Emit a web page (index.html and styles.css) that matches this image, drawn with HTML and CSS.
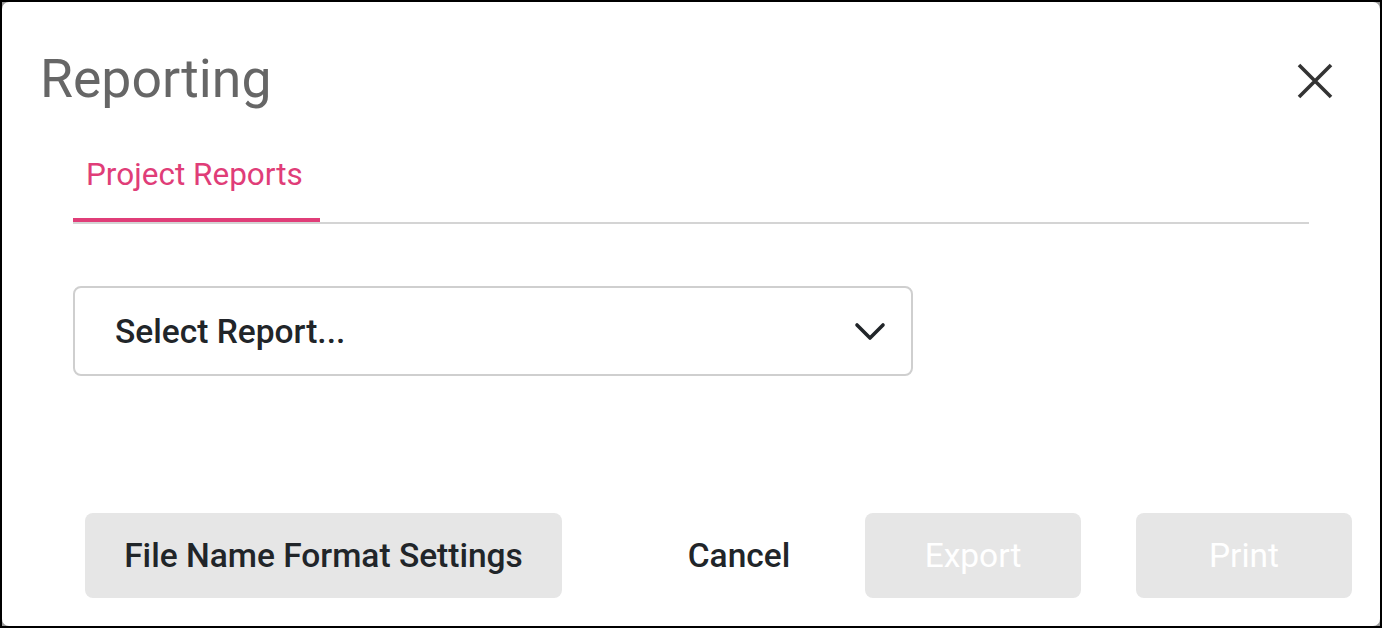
FILE: index.html
```html
<!DOCTYPE html>
<html lang="en">
<head>
<meta charset="utf-8">
<title>Reporting</title>
<link rel="stylesheet" href="styles.css">
</head>
<body>
<div class="screen">
  <div class="dialog">
    <header class="dialog-header">
      <h1 class="dialog-title">Reporting</h1>
      <button class="close-btn" aria-label="Close">
        <svg width="36" height="36" viewBox="0 0 36 36"><path d="M2 2 L34 34 M34 2 L2 34" stroke="#333" stroke-width="3.6" fill="none"/></svg>
      </button>
    </header>
    <div class="dialog-body">
      <nav class="tabs">
        <div class="tab active">Project Reports</div>
      </nav>
      <div class="select">
        <span class="select-text">Select Report...</span>
        <svg class="chevron" width="32" height="20" viewBox="0 0 32 20"><path d="M3 3 L16 16 L29 3" stroke="#212529" stroke-width="3.6" fill="none" stroke-linecap="round" stroke-linejoin="round"/></svg>
      </div>
    </div>
    <footer class="dialog-footer">
      <button class="btn btn-gray btn-file">File Name Format Settings</button>
      <button class="btn btn-cancel">Cancel</button>
      <button class="btn btn-gray btn-disabled btn-export">Export</button>
      <button class="btn btn-gray btn-disabled btn-print">Print</button>
    </footer>
  </div>
</div>
</body>
</html>
```

FILE: styles.css
```css
* { box-sizing: border-box; }
html, body { margin: 0; padding: 0; }
body {
  width: 1382px;
  height: 628px;
  background: #000;
  font-family: Roboto, "Liberation Sans", sans-serif;
  overflow: hidden;
}
.screen {
  width: 1382px;
  height: 628px;
  border: 2px solid #000;
  background: #9a9a9a;
}
.dialog {
  width: 100%;
  height: 100%;
  background: #fff;
  border-radius: 7px;
  display: flex;
  flex-direction: column;
}
.dialog-header {
  display: flex;
  align-items: center;
  justify-content: space-between;
  padding: 45px 47px 0 38px;
}
.dialog-title {
  margin: 0;
  font-size: 53.5px;
  line-height: 64px;
  font-weight: 400;
  color: #666;
}
.close-btn {
  border: 0;
  background: none;
  padding: 0;
  width: 36px;
  height: 36px;
  display: flex;
  margin-top: 3px;
}
.dialog-body {
  padding: 0 71px;
}
.tabs {
  margin-top: 46px;
  display: flex;
  border-bottom: 2px solid #d4d4d4;
}
.tab {
  width: 247px;
  padding: 0 0 25px 13px;
  font-size: 31.5px;
  line-height: 36px;
  font-weight: 400;
  color: #e03d78;
  border-bottom: 4px solid #e03d78;
  white-space: nowrap;
}
.select {
  margin-top: 62px;
  width: 840px;
  height: 90px;
  border: 2px solid #cfcfcf;
  border-radius: 8px;
  display: flex;
  align-items: center;
  justify-content: space-between;
  padding: 0 25px 0 40px;
}
.select-text {
  font-size: 33.5px;
  font-weight: 500;
  color: #212529;
}
.chevron { margin-top: 2px; }
.dialog-footer {
  margin-top: auto;
  margin-bottom: 28px;
  display: flex;
  align-items: center;
  padding-left: 83px;
}
.btn {
  height: 85px;
  border: 0;
  border-radius: 8px;
  font-family: Roboto, "Liberation Sans", sans-serif;
  font-size: 33.5px;
  font-weight: 500;
  color: #212529;
  background: none;
  padding: 0;
  white-space: nowrap;
}
.btn-gray { background: #e6e6e6; }
.btn-file { width: 477px; }
.btn-cancel { width: 216px; margin-left: 69px; }
.btn-export { width: 216px; margin-left: 18px; }
.btn-print { width: 216px; margin-left: 55px; }
.btn-disabled { color: #fff; font-weight: 400; }
```
